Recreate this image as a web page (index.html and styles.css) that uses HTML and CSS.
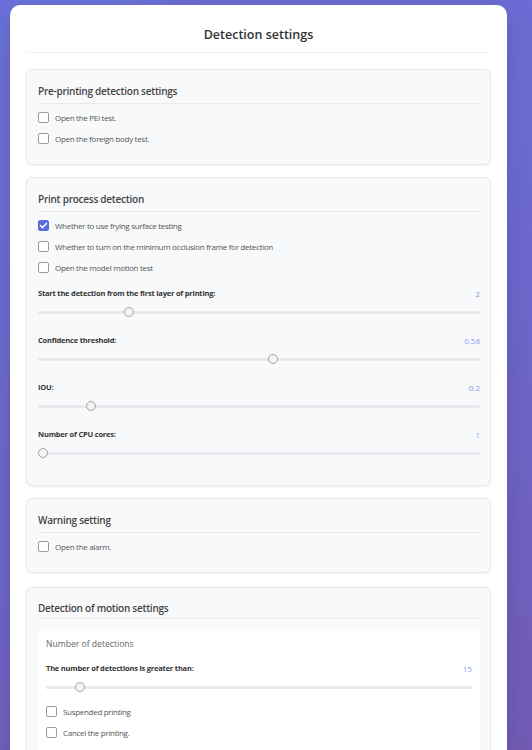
FILE: index.html
```html
<!DOCTYPE html>
<html lang="en">
<head>
<meta charset="utf-8">
<title>Detection settings</title>
<link rel="stylesheet" href="styles.css">
</head>
<body>
<div class="page">
  <div class="card">
    <h1 class="title">Detection settings</h1>

    <section class="section">
      <h2 class="section-title">Pre-printing detection settings</h2>
      <label class="check"><span class="box"></span><span>Open the PEI test.</span></label>
      <label class="check"><span class="box"></span><span>Open the foreign body test.</span></label>
    </section>

    <section class="section">
      <h2 class="section-title">Print process detection</h2>
      <label class="check"><span class="box checked"><svg viewBox="0 0 11 11" width="11" height="11"><path d="M2.6 5.6 L4.6 7.6 L8.4 3.4" fill="none" stroke="#fff" stroke-width="1.5" stroke-linecap="round" stroke-linejoin="round"/></svg></span><span>Whether to use frying surface testing</span></label>
      <label class="check"><span class="box"></span><span>Whether to turn on the minimum occlusion frame for detection</span></label>
      <label class="check"><span class="box"></span><span>Open the model motion test</span></label>

      <div class="slider-group first">
        <div class="slider-head"><span class="slider-label">Start the detection from the first layer of printing:</span><span class="slider-value">2</span></div>
        <input class="range" type="range" min="1" max="6" step="1" value="2">
      </div>
      <div class="slider-group">
        <div class="slider-head"><span class="slider-label">Confidence threshold:</span><span class="slider-value">0.58</span></div>
        <input class="range" type="range" min="0.1" max="1" step="0.01" value="0.58">
      </div>
      <div class="slider-group">
        <div class="slider-head"><span class="slider-label">IOU:</span><span class="slider-value">0.2</span></div>
        <input class="range" type="range" min="0.1" max="1" step="0.01" value="0.2">
      </div>
      <div class="slider-group last">
        <div class="slider-head"><span class="slider-label">Number of CPU cores:</span><span class="slider-value">1</span></div>
        <input class="range" type="range" min="1" max="8" step="1" value="1">
      </div>
    </section>

    <section class="section">
      <h2 class="section-title">Warning setting</h2>
      <label class="check"><span class="box"></span><span>Open the alarm.</span></label>
    </section>

    <section class="section motion">
      <h2 class="section-title tight">Detection of motion settings</h2>
      <div class="inner">
        <div class="inner-title">Number of detections</div>
        <div class="slider-group inner-slider">
          <div class="slider-head"><span class="slider-label">The number of detections is greater than:</span><span class="slider-value">15</span></div>
          <input class="range" type="range" min="1" max="200" step="1" value="15">
        </div>
        <label class="check"><span class="box"></span><span>Suspended printing</span></label>
        <label class="check"><span class="box"></span><span>Cancel the printing.</span></label>
        <div class="inner-spacer"></div>
      </div>
    </section>
  </div>
</div>
</body>
</html>
```

FILE: styles.css
```css
* { box-sizing: border-box; }

html, body {
  margin: 0;
  padding: 0;
}

body {
  font-family: "Open Sans", "Noto Sans", sans-serif;
  background: linear-gradient(160deg, #6a70d8 0%, #6c66ca 50%, #7258b0 100%);
  min-height: 100vh;
}

.page {
  padding: 5px 0 20px 10px;
}

.card {
  width: 497px;
  background: #fff;
  border-radius: 10px;
  padding: 0 16px 16px;
  box-shadow: 0 6px 20px rgba(0, 0, 0, 0.12);
}

.title {
  margin: 0;
  padding: 20px 0 7px;
  font-size: 12.5px;
  line-height: 20px;
  font-weight: 600;
  color: #333;
  text-align: center;
  border-bottom: 1px solid #f0f1f3;
}

.section {
  margin-top: 16px;
  background: #f8f9fa;
  border: 1px solid #e6e8eb;
  border-radius: 6px;
  padding: 12px 10px 15px 11px;
  box-shadow: 0 1px 3px rgba(0, 0, 0, 0.06);
}

.section + .section {
  margin-top: 12px;
}

.section + .section.motion {
  margin-top: 14px;
  padding-top: 11px;
}

.section-title {
  margin: 0 0 3px;
  font-size: 10px;
  letter-spacing: -0.25px;
  line-height: 18px;
  font-weight: 600;
  color: #444;
  padding-bottom: 3px;
  border-bottom: 1px solid #e8eaed;
}

.section-title.tight {
  padding-bottom: 1px;
  margin-bottom: 3px;
}

.check {
  display: flex;
  align-items: center;
  gap: 6px;
  height: 21px;
  font-size: 8px;
  letter-spacing: -0.3px;
  color: #555;
}

.box {
  flex: none;
  width: 11px;
  height: 11px;
  border: 1px solid #9a9a9a;
  border-radius: 2px;
  background: #fff;
  display: flex;
}

.box.checked {
  background: #5b6ee1;
  border-color: #5b6ee1;
}

.box svg {
  margin: -1px;
}

.slider-group {
  margin-top: 16px;
}

.slider-group.first {
  margin-top: 8px;
}

.slider-group.last {
  margin-bottom: 12px;
}

.slider-head {
  display: flex;
  justify-content: space-between;
  align-items: center;
  height: 14px;
}

.slider-label {
  font-size: 7.5px;
  letter-spacing: -0.2px;
  font-weight: 700;
  color: #333;
}

.slider-value {
  font-size: 8px;
  color: #8a9af0;
}

.range {
  -webkit-appearance: none;
  appearance: none;
  display: block;
  width: 100%;
  height: 10px;
  margin: 7px 0 0;
  padding: 0;
  background: transparent;
}

.range::-webkit-slider-runnable-track {
  height: 3px;
  background: #e7e9ec;
  border-radius: 2px;
}

.range::-webkit-slider-thumb {
  -webkit-appearance: none;
  appearance: none;
  width: 10px;
  height: 10px;
  margin-top: -3.5px;
  border-radius: 50%;
  background: #f4f4f4;
  border: 1px solid #a3a3a3;
}

.inner {
  margin-top: 10px;
  background: #fff;
  border-radius: 6px;
  padding: 7px 8px 8px;
  box-shadow: 0 1px 2px rgba(0, 0, 0, 0.05);
}

.inner-title {
  font-size: 8.6px;
  line-height: 16px;
  color: #666;
}

.inner-slider {
  margin-top: 9px;
  margin-bottom: 9px;
}

.inner-spacer {
  height: 20px;
}
```
